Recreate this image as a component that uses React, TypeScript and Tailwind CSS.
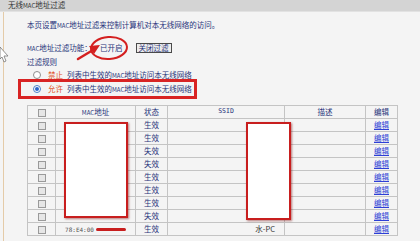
import React from 'react';

const STATUS = ['生效', '生效', '失效', '失效', '生效', '生效', '生效', '失效', '生效'];

const cjk = { fontFamily: '"Noto Sans CJK SC", "Noto Sans", sans-serif' };

// the screenshot renders "MAC" in a small bitmap-ish font
const Mac = () => <span className="text-[6px]">MAC</span>;

function Checkbox() {
  return <span className="inline-block w-[8px] h-[8px] border border-[#9a9a9a] bg-[#e6e6e6] align-middle" />;
}

function Radio({ checked }: { checked?: boolean }) {
  return (
    <span
      className={`flex items-center justify-center w-[8px] h-[8px] rounded-full border bg-white shrink-0 ${
        checked ? 'border-[#4a7fc8]' : 'border-[#8f8f8f]'
      }`}
    >
      {checked && <span className="w-[4px] h-[4px] rounded-full bg-[#2c66c9]" />}
    </span>
  );
}

export default function App() {
  return (
    <div
      className="relative w-[420px] h-[241px] overflow-hidden bg-[#f4f4f4] text-[7.5px] text-[#27337a] whitespace-nowrap"
      style={cjk}
    >
      {/* Title bar */}
      <div className="h-[12px] bg-[#d4d4d4] border-b border-[#e2e2e2] pl-[8px] text-[#333] leading-[10px]">
        无线<Mac />地址过滤
      </div>

      <div className="ml-[3px] border-l border-[#e4cba8] h-[229px] flex flex-col">
        {/* Description */}
        <div className="mt-[8px] ml-[23px] h-[9px] leading-[9px]">
          本页设置<Mac />地址过滤来控制计算机对本无线网络的访问。
        </div>

        {/* Filter switch */}
        <div className="mt-[14px] ml-[23px] h-[10px] flex items-center">
          <span className="w-[73px] leading-[10px]">
            <Mac />地址过滤功能：
          </span>
          <span className="leading-[10px]">已开启</span>
          <button className="ml-[13px] h-[10px] px-[2px] border border-[#4a4a4a] bg-[#ececec] text-[#27337a] leading-[8px] text-[7.5px]">
            关闭过滤
          </button>
        </div>

        {/* Filter rule */}
        <div className="mt-[5px] ml-[23px] h-[8px] leading-[8px]">过滤规则</div>

        <div className="mt-[4px] ml-[29px] h-[9px] flex items-center">
          <Radio />
          <span className="ml-[7px] text-[#e0501e]">禁止</span>
          <span className="ml-[4px]">
            列表中生效的<Mac />地址访问本无线网络
          </span>
        </div>

        <div className="ml-[14px] w-[179px] h-[20px] border-[3px] border-[#d82424] flex items-center pl-[12px]">
          <Radio checked />
          <span className="ml-[7px] text-[#e0501e]">允许</span>
          <span className="ml-[4px]">
            列表中生效的<Mac />地址访问本无线网络
          </span>
        </div>

        {/* Table */}
        <div className="relative mt-[6px] ml-[23px] w-[370px]">
          <table className="table-fixed border-collapse w-[370px] text-center">
            <colgroup>
              <col className="w-[28px]" />
              <col className="w-[80px]" />
              <col className="w-[32px]" />
              <col className="w-[117px]" />
              <col className="w-[81px]" />
              <col className="w-[32px]" />
            </colgroup>
            <thead>
              <tr className="h-[13px]">
                <th className="border border-[#c4c4c4] font-normal p-0">
                  <Checkbox />
                </th>
                <th className="border border-[#c4c4c4] font-normal p-0">
                  <Mac />地址
                </th>
                <th className="border border-[#c4c4c4] font-normal p-0">状态</th>
                <th className="border border-[#c4c4c4] font-normal p-0 text-[6.5px]" style={{ fontFamily: '"DejaVu Sans Mono", monospace' }}>
                  SSID
                </th>
                <th className="border border-[#c4c4c4] font-normal p-0">描述</th>
                <th className="border border-[#c4c4c4] font-normal p-0">编辑</th>
              </tr>
            </thead>
            <tbody>
              {STATUS.map((s, i) => {
                const last = i === STATUS.length - 1;
                return (
                  <tr key={i} className="h-[13px]">
                    <td className="border border-[#c4c4c4] p-0">
                      <Checkbox />
                    </td>
                    <td className="border border-[#c4c4c4] p-0">
                      {last && (
                        <span className="flex items-center justify-center gap-[2px]">
                          <span className="text-[6px] text-[#555]" style={{ fontFamily: '"DejaVu Sans Mono", monospace' }}>
                            78:E4:00
                          </span>
                          <span className="w-[30px] h-[3px] rounded-full bg-[#c81e1e]" />
                        </span>
                      )}
                    </td>
                    <td className="border border-[#c4c4c4] p-0">{s}</td>
                    <td className="border border-[#c4c4c4] p-0 text-right pr-[9px] text-[#333]">{last ? '水-PC' : ''}</td>
                    <td className="border border-[#c4c4c4] p-0" />
                    <td className="border border-[#c4c4c4] p-0">
                      <span className="text-[#2d3fd6] underline">编辑</span>
                    </td>
                  </tr>
                );
              })}
            </tbody>
          </table>

          {/* Redaction boxes */}
          <div className="absolute left-[37px] top-[17px] w-[64px] h-[96px] bg-white border-2 border-[#c81e1e] shadow-[1px_1px_2px_rgba(120,0,0,0.5)]" />
          <div className="absolute left-[219px] top-[17px] w-[45px] h-[98px] bg-white border-2 border-[#c81e1e] shadow-[1px_1px_2px_rgba(120,0,0,0.5)]" />
        </div>
      </div>

      {/* Annotation: ellipse and arrow */}
      <svg className="absolute left-[75px] top-[33px]" width="58" height="32" viewBox="0 0 58 32">
        <ellipse cx="34" cy="15" rx="18" ry="11" fill="none" stroke="#d42020" strokeWidth="2" transform="rotate(-4 34 15)" />
        <line x1="3" y1="26" x2="18" y2="17" stroke="#d42020" strokeWidth="2.5" strokeLinecap="round" />
        <polygon points="14,13 25,12 19,21" fill="#d42020" />
      </svg>

      {/* Cursor at the left edge */}
      <svg className="absolute left-0 top-[47px]" width="9" height="16" viewBox="0 0 9 16">
        <path d="M0 0 L8 9 L4 9 L6 14 L4 15 L2 10 L0 12 Z" fill="#fff" stroke="#777" strokeWidth="0.8" />
      </svg>
    </div>
  );
}
